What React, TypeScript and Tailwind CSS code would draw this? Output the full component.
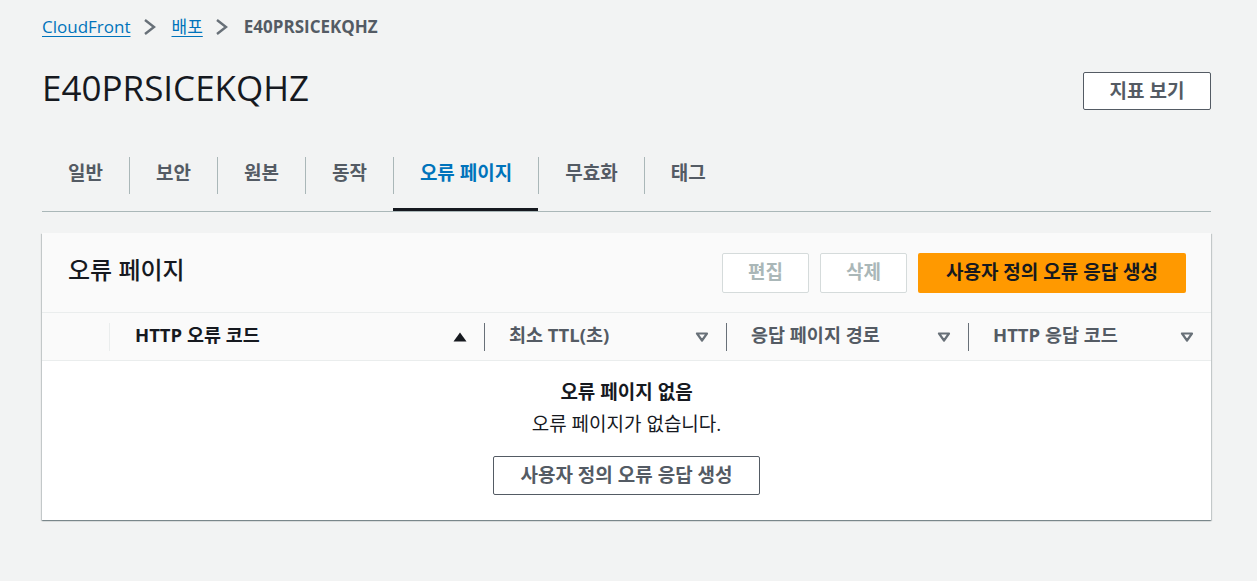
import React from 'react'

const font = { fontFamily: '"Open Sans", "Noto Sans CJK KR", sans-serif' }

function Chevron() {
  return (
    <svg width="16" height="18" viewBox="0 0 16 18" className="ml-[11px] mr-[14px] shrink-0">
      <path d="M3 2l9 7-9 7" fill="none" stroke="#687078" strokeWidth="2.4" />
    </svg>
  )
}

function SortDown() {
  return (
    <svg width="14" height="10" viewBox="0 0 14 10">
      <path d="M2 1.5h10L7 8.5z" fill="none" stroke="#687078" strokeWidth="2.2" strokeLinejoin="round" />
    </svg>
  )
}

function SortUp() {
  return (
    <svg width="14" height="10" viewBox="0 0 14 10">
      <path d="M7 0.5L13.5 9.5H0.5z" fill="#16191f" />
    </svg>
  )
}

const tabs = ['일반', '보안', '원본', '동작', '오류 페이지', '무효화', '태그']

const columns = [
  { label: '최소 TTL(초)' },
  { label: '응답 페이지 경로' },
  { label: 'HTTP 응답 코드' },
]

export default function App() {
  return (
    <div className="min-h-[581px] bg-[#f2f3f3] pl-[42px] pr-[46px] pt-[14px] text-[#16191f]" style={font}>
      {/* breadcrumb */}
      <div className="flex h-[26px] items-center text-[17px]">
        <a className="text-[#0073bb] underline underline-offset-[3px]">CloudFront</a>
        <Chevron />
        <a className="text-[#0073bb] underline underline-offset-[3px]">배포</a>
        <Chevron />
        <span className="font-bold text-[#545b64]">E40PRSICEKQHZ</span>
      </div>

      {/* title */}
      <div className="mt-[32px] flex items-center justify-between">
        <h1 className="-mt-[6px] text-[35px] leading-[38px] font-normal">E40PRSICEKQHZ</h1>
        <button className="h-[38px] w-[128px] rounded-[2px] border border-[#545b64] bg-white text-[19px] font-bold text-[#545b64]">
          지표 보기
        </button>
      </div>

      {/* tabs */}
      <div className="mt-[29px] flex border-b border-[#aab7b8]">
        {tabs.map((t, i) => (
          <div key={t} className="relative flex h-[72px] items-center">
            {i > 0 && <div className="h-[37px] w-px bg-[#aab7b8]" />}
            <div
              className={
                'mb-[4px] px-[26px] text-[19px] font-bold ' +
                (t === '오류 페이지' ? 'text-[#0073bb]' : 'text-[#545b64]')
              }
            >
              {t}
            </div>
            {t === '오류 페이지' && (
              <div className="absolute bottom-0 left-0 right-0 h-[3px] bg-[#16191f]" />
            )}
          </div>
        ))}
      </div>

      {/* card */}
      <div className="mt-[21px] bg-white shadow-[0_1px_1px_0_rgba(0,28,36,0.3),1px_1px_1px_0_rgba(0,28,36,0.15),-1px_1px_1px_0_rgba(0,28,36,0.15)]">
        <div className="flex h-[80px] items-center justify-between border-b border-[#eaeded] bg-[#fafafa] pl-[26px] pr-[25px]">
          <h2 className="mb-[5px] text-[24px] font-medium">오류 페이지</h2>
          <div className="flex gap-[11px]">
            <button className="h-[40px] w-[87px] rounded-[2px] border border-[#d5dbdb] bg-white text-[19px] font-bold text-[#aab7b8]">
              편집
            </button>
            <button className="h-[40px] w-[87px] rounded-[2px] border border-[#d5dbdb] bg-white text-[19px] font-bold text-[#aab7b8]">
              삭제
            </button>
            <button className="h-[40px] w-[268px] rounded-[2px] bg-[#ff9900] text-[19px] font-bold text-[#16191f]">
              사용자 정의 오류 응답 생성
            </button>
          </div>
        </div>

        {/* table header */}
        <div className="flex h-[48px] items-center border-b border-[#eaeded] bg-[#fafafa] text-[18.5px] font-bold">
          <div className="h-[28px] w-[68px] border-r border-[#eaeded]" />
          <div className="flex w-[374px] items-center justify-between pl-[25px] pr-[17px] text-[#16191f]">
            <span className="mb-[3px]">HTTP 오류 코드</span>
            <SortUp />
          </div>
          {columns.map((c, i) => (
            <div
              key={c.label}
              className={'flex items-center ' + (i === 2 ? 'w-[243px]' : 'w-[242px]')}
            >
              <div className="h-[28px] w-px bg-[#687078]" />
              <div className="flex flex-1 items-center justify-between pl-[24px] pr-[17px] text-[#545b64]">
                <span className="mb-[3px]">{c.label}</span>
                <SortDown />
              </div>
            </div>
          ))}
        </div>

        {/* empty state */}
        <div className="flex flex-col items-center pt-[17px] pb-[25px] text-[19px]">
          <div className="font-bold leading-[28px]">오류 페이지 없음</div>
          <div className="mt-[4px] leading-[28px]">오류 페이지가 없습니다.</div>
          <button className="mt-[18px] h-[39px] w-[267px] rounded-[2px] border border-[#545b64] bg-white text-[19px] font-bold text-[#545b64]">
            사용자 정의 오류 응답 생성
          </button>
        </div>
      </div>
    </div>
  )
}
